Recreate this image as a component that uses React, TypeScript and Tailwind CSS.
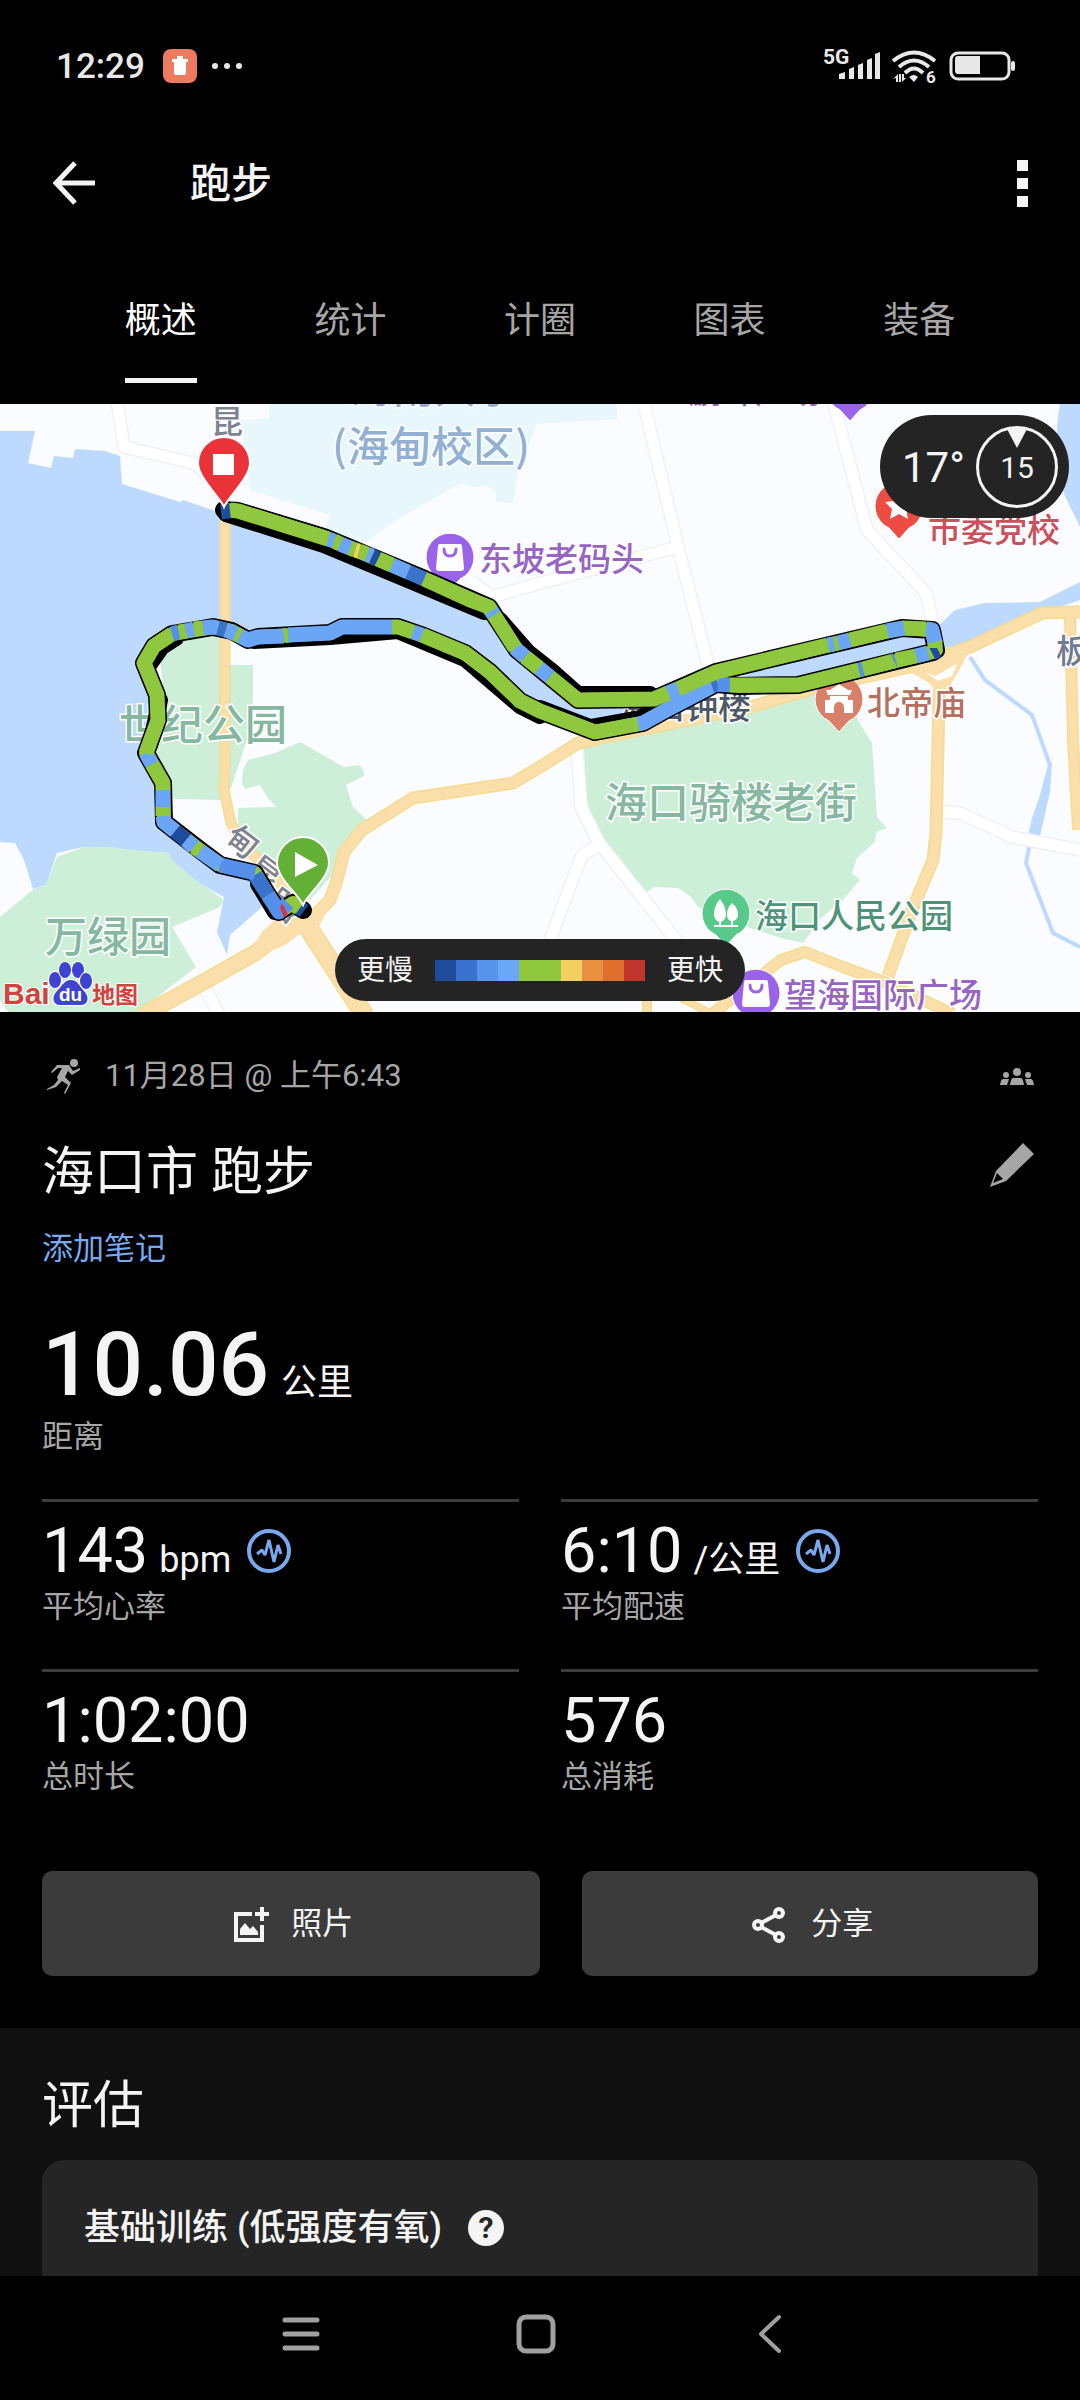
import type { ReactNode } from "react";

const GREEN = "#8fc73e";
const BLUE = "#6aa6f5";
const MID = "#5490ea";
const DARK = "#3a72cc";
const NAVY = "#1e4b9c";

const tabs = ["概述", "统计", "计圈", "图表", "装备"];

const routeOutline =
  "303,910 293,903 279,912 268,895 255,873 220,865 200,850 164,822 163,783 146,753 158,720 157,695 144,663 154,646 172,634 213,627 232,631 248,640 258,637 330,633 342,627 398,627 424,636 465,653 490,672 520,701 540,711 595,732 643,723 670,708 716,684 740,686 798,685 933,652 936,650 932,630 902,628 716,672 654,699 578,700 550,677 517,650 489,607 420,577 324,537 238,511 224,510";

const route = [
  { color: NAVY, points: "304,911 300,908" },
  { color: GREEN, points: "299,908 290,902" },
  { color: MID, points: "288,903 279,912 268,895" },
  { color: DARK, points: "268,895 255,875" },
  { color: MID, points: "255,873 220,865" },
  { color: BLUE, points: "220,865 200,851" },
  { color: GREEN, points: "200,851 194,847" },
  { color: BLUE, points: "194,847 186,840" },
  { color: NAVY, points: "186,840 175,831" },
  { color: BLUE, points: "175,831 164,822 163,816" },
  { color: GREEN, points: "163,816 163,807" },
  { color: BLUE, points: "163,807 163,790" },
  { color: GREEN, points: "163,790 163,783 152,764" },
  { color: BLUE, points: "152,764 146,753" },
  { color: GREEN, points: "146,753 158,720 157,695 144,663 154,646 172,634" },
  { color: MID, points: "172,634 179,632" },
  { color: GREEN, points: "179,632 186,631" },
  { color: BLUE, points: "186,631 194,629" },
  { color: GREEN, points: "194,629 203,628" },
  { color: BLUE, points: "203,628 213,627 218,628" },
  { color: DARK, points: "218,628 226,630" },
  { color: BLUE, points: "226,630 236,634" },
  { color: GREEN, points: "236,634 240,636" },
  { color: BLUE, points: "240,636 248,640 258,637 284,636" },
  { color: GREEN, points: "284,636 288,635" },
  { color: BLUE, points: "288,635 330,633 342,627 392,627" },
  { color: GREEN, points: "392,627 398,627 413,632" },
  { color: BLUE, points: "413,632 422,635" },
  { color: GREEN, points: "422,635 465,653 490,672 520,701 540,711 595,732 638,724" },
  { color: BLUE, points: "638,724 643,723 670,708 712,686" },
  { color: DARK, points: "712,686 718,684" },
  { color: MID, points: "718,684 730,685" },
  { color: GREEN, points: "730,685 798,685 859,670" },
  { color: MID, points: "859,670 863,669" },
  { color: GREEN, points: "863,669 894,661" },
  { color: MID, points: "894,661 896,660" },
  { color: GREEN, points: "896,660 916,656" },
  { color: BLUE, points: "916,656 928,653" },
  { color: NAVY, points: "932,653 938,650" },
  { color: GREEN, points: "935,648 935,640" },
  { color: BLUE, points: "935,642 932,630 926,629" },
  { color: GREEN, points: "926,629 902,628" },
  { color: BLUE, points: "904,628 887,631" },
  { color: GREEN, points: "887,631 850,640" },
  { color: BLUE, points: "850,640 838,643" },
  { color: GREEN, points: "838,643 834,644" },
  { color: BLUE, points: "834,644 828,645" },
  { color: GREEN, points: "828,645 716,672 678,689" },
  { color: BLUE, points: "678,689 668,693" },
  { color: GREEN, points: "668,693 654,699 578,700 550,677" },
  { color: BLUE, points: "550,677 539,668" },
  { color: GREEN, points: "539,668 525,657" },
  { color: BLUE, points: "525,657 515,648" },
  { color: GREEN, points: "515,648 494,615" },
  { color: BLUE, points: "494,615 490,609" },
  { color: GREEN, points: "491,611 489,607 470,600 424,579" },
  { color: DARK, points: "424,579 408,572" },
  { color: BLUE, points: "408,572 392,565" },
  { color: GREEN, points: "392,565 378,559" },
  { color: NAVY, points: "378,559 372,556" },
  { color: BLUE, points: "372,556 367,554" },
  { color: GREEN, points: "367,554 359,551" },
  { color: "#efd060", points: "359,551 355,550" },
  { color: GREEN, points: "355,550 350,548" },
  { color: BLUE, points: "350,548 340,544" },
  { color: GREEN, points: "340,544 334,541" },
  { color: BLUE, points: "334,541 328,539" },
  { color: GREEN, points: "328,539 238,511 230,510" },
  { color: NAVY, points: "230,511 221,512" },
];

const routeShadows = [
  "226,514 324,545 420,585 484,612",
  "254,641 330,637 398,631 465,659 520,706 540,716",
  "150,664 162,647 176,638",
  "160,700 150,745",
  "258,884 275,912",
  "500,620 528,652 552,671 578,694 650,694",
  "540,708 590,727 640,718 700,686",
];

const majorRoads = [
  { width: 11, points: "225,510 225,770 224,790 231,823 241,842 286,889 300,912" },
  { width: 20, points: "300,915 344,983 365,1016" },
  { width: 17, points: "141,1016 207,980 255,953 300,918" },
  { width: 13, points: "312,918 330,900 337,880 344,852 362,830 413,798 513,783 540,767 578,743 640,730 747,708 815,688 919,665 970,647 1042,613 1080,612" },
  { width: 13, points: "941,670 939,700 936,833 933,860 912,910 888,976" },
  { width: 12, points: "712,1014 781,960 805,952 843,967 884,982 953,1014" },
  { width: 10, points: "647,1014 647,995" },
  { width: 8, points: "712,1014 681,998" },
  { width: 12, points: "1070,613 1073,740 1078,830" },
];

const minorRoads = [
  "117,400 124,447 193,463 215,480",
  "643,400 678,547 712,680",
  "674,548 540,583 492,597 470,580",
  "833,400 867,530 926,593 933,625",
  "577,750 581,807 599,843 680,945",
  "597,845 581,857 550,940",
  "943,812 960,813 1012,837 1080,850",
  "203,985 220,1016",
];

const placeLabels = [
  { x: 350, y: 403, size: 42, fill: "#93afd3", text: "海南大学" },
  { x: 332, y: 462, size: 42, fill: "#93afd3", text: "(海甸校区)" },
  { x: 119, y: 740, size: 42, fill: "#86b7a0", text: "世纪公园" },
  { x: 605, y: 818, size: 42, fill: "#86b7a0", text: "海口骑楼老街" },
  { x: 45, y: 952, size: 42, fill: "#86b7a0", text: "万绿园" },
  { x: 211, y: 433, size: 32, fill: "#7f8391", text: "昆" },
  { x: 689, y: 403, size: 33, fill: "#9765c4", text: "鹏晖广场" },
  { x: 479, y: 571, size: 33, fill: "#9765c4", text: "东坡老码头" },
  { x: 784, y: 1007, size: 33, fill: "#9765c4", text: "望海国际广场" },
  { x: 928, y: 542, size: 33, fill: "#c9505c", text: "市委党校" },
  { x: 867, y: 715, size: 33, fill: "#b5705f", text: "北帝庙" },
  { x: 755, y: 928, size: 33, fill: "#4f9478", text: "海口人民公园" },
  { x: 619, y: 719, size: 33, fill: "#4d5768", text: "海口钟楼" },
  { x: 1056, y: 663, size: 33, fill: "#6f7b92", text: "板" },
];

const paceColors = [
  "bg-[#1e4b9c]",
  "bg-[#3973cf]",
  "bg-[#5893ec]",
  "bg-[#6ba7f7]",
  "bg-[#8fc73e]",
  "bg-[#8fc73e]",
  "bg-[#f3cf61]",
  "bg-[#e99040]",
  "bg-[#df6f2c]",
  "bg-[#c2352c]",
];

function StatusBar() {
  return (
    <div className="flex h-[132px] items-center justify-between pr-[65px] pl-[56px] text-[#e8e8e8]">
      <div className="flex items-center">
        <span className="text-[35px] leading-none font-medium">12:29</span>
        <svg className="ml-[18px] size-[34px]" viewBox="0 0 34 34">
          <rect width="34" height="34" rx="8" fill="#ee7a5f" />
          <path d="M9 10h16v3H9zM14 7h6v3h-6zM11 13h12v11a2 2 0 0 1-2 2h-8a2 2 0 0 1-2-2z" fill="#fff" />
        </svg>
        <svg className="ml-[14px] h-2 w-8" viewBox="0 0 32 8" fill="currentColor">
          <circle cx="4" cy="4" r="3" />
          <circle cx="16" cy="4" r="3" />
          <circle cx="28" cy="4" r="3" />
        </svg>
      </div>
      <svg className="h-14 w-[196px] overflow-visible" viewBox="819 38 196 56" fill="currentColor">
        <text x="823" y="64" fontSize="21" fontWeight="700">5G</text>
        <path d="M839 79v-5l6-2v7zM849 79v-10l5-2v12zM858 79v-14l5-2v16zM867 79v-19l5-2v21zM875 79v-25l5-2v27z" />
        <g fill="none" stroke="currentColor" strokeWidth="4">
          <path d="M893 61q21-17 42 0" />
          <path d="M899 67q15-13 30 0" />
          <path d="M905 73q9-9 18 0" />
        </g>
        <path d="M909 77q5-4 9 0l-4 5z" />
        <path d="M893 79l5-5v8h-2v-4zM899 74h2v8h-2zM902 74h2v4h2l-4 4z" />
        <text x="926" y="83" fontSize="17" fontWeight="700">6</text>
        <rect x="951" y="53" width="58" height="26" rx="7" fill="none" stroke="currentColor" strokeWidth="3" />
        <path d="M958 56h22v18h-22a3 3 0 0 1-3-3V59a3 3 0 0 1 3-3z" />
        <rect x="1011" y="61" width="4" height="10" rx="2" />
      </svg>
    </div>
  );
}

function Poi({ x, y, color, children }: { x: number; y: number; color: string; children: ReactNode }) {
  return (
    <g transform={`translate(${x} ${y})`}>
      <path d="M0 33l-10-11A24 24 0 1 1 10 22z" fill={color} stroke="#fff" strokeWidth="1" />
      <g fill="#fff">{children}</g>
    </g>
  );
}

function Bag({ color }: { color: string }) {
  return (
    <>
      <path d="M-10-13h20a2 2 0 0 1 2 2l2 22a3 3 0 0 1-3 3h-22a3 3 0 0 1-3-3l2-22a2 2 0 0 1 2-2z" />
      <path d="M-6-8q0 7 6 7t6-7" fill="none" stroke={color} strokeWidth="3" strokeLinecap="round" />
    </>
  );
}

function MapCanvas() {
  return (
    <svg
      className="block h-full w-full"
      viewBox="0 404 1080 608"
      preserveAspectRatio="xMidYMid slice"
      role="img"
      aria-label="跑步路线"
    >
      <rect y="404" width="1080" height="608" fill="#fbfcff" />

      {/* campus, water, parks */}
      <polygon
        points="269,404 269,418 241,420 250,490 330,515 324,533 365,543 396,520 461,483 475,488 485,485 496,492 496,502 513,503 516,483 527,450 537,424 617,419 617,404"
        fill="#e8f7fc"
      />
      <g fill="#bed9fe">
        <polygon points="0,431 35,431 28,463 51,468 54,456 73,458 75,449 105,451 120,456 122,484 180,502 183,500 218,512 330,548 425,585 480,607 500,640 545,675 578,700 660,700 716,672 902,628 932,632 955,610 985,603 1040,602 1080,582 1080,600 1040,614 970,643 945,648 933,652 798,682 716,684 690,700 643,723 595,732 540,711 520,701 465,653 398,628 250,636 172,634 144,663 158,700 146,753 163,783 164,822 200,850 225,868 255,880 270,902 262,907 230,935 227,955 217,932 224,897 193,880 172,863 169,853 83,847 57,853 46,885 33,889 24,860 15,843 0,842" />
        <path d="M1060 404q-8 40 4 90l16 33V404z" />
        <path d="M1052 762l-2 30-10 44h-12l4-18z" />
      </g>
      <polyline
        points="970,657 985,680 1032,715 1050,765 1032,833 1026,863 1053,933 1080,947"
        fill="none"
        stroke="#bed9fe"
        strokeWidth="4"
      />
      <g fill="#cdefd7">
        <polygon points="160,660 175,640 200,637 220,636 220,665 253,665 253,700 248,737 231,788 220,800 174,799 155,755 165,700" />
        <polygon points="300,742 344,767 360,765 364,772 364,776 346,785 353,807 367,820 348,840 334,873 310,900 275,885 238,827 238,808 276,807 267,797 260,785 245,789 242,783 243,770 248,760 275,753" />
        <polygon points="0,917 34,889 46,885 57,857 83,847 110,847 140,851 169,853 172,860 193,878 224,900 220,907 172,927 196,967 138,1012 8,1012 0,1000" />
        <polygon points="580,748 640,733 753,713 802,696 826,690 850,705 862,727 872,743 877,817 887,828 877,832 874,843 857,858 852,873 860,880 843,900 815,923 811,932 803,943 781,938 747,927 698,907 691,897 678,888 654,887 647,892 602,840 588,827 583,783" />
      </g>

      {/* streets */}
      <g fill="none" strokeLinejoin="round">
        {minorRoads.map((points) => (
          <polyline key={points} points={points} stroke="#f0f1f5" strokeWidth="14" />
        ))}
        {minorRoads.map((points) => (
          <polyline key={points} points={points} stroke="#fff" strokeWidth="11" />
        ))}
        {majorRoads.map((road) => (
          <polyline key={road.points} points={road.points} stroke="#f4dc90" strokeWidth={road.width} />
        ))}
        {majorRoads.map((road) => (
          <polyline key={road.points} points={road.points} stroke="#fbdfab" strokeWidth={road.width - 3} />
        ))}
      </g>
      <path d="M912 673l24-18 34-6-10 20-12 20-8 8-11-14z" fill="#fbdfab" />
      <path d="M925 672l10 4 22-12-5 12-14 5z" fill="#fff" />
      <polygon points="250,950 262,932 280,915 325,915 320,925 305,930 285,945 262,955" fill="#fbdfab" />

      <g fontFamily='"Noto Sans CJK SC", sans-serif' fontWeight="500" stroke="#fff" strokeWidth="3" paintOrder="stroke">
        {placeLabels.map((label) => (
          <text key={label.text} x={label.x} y={label.y} fontSize={label.size} fill={label.fill}>
            {label.text}
          </text>
        ))}
        <g fontSize="32" fill="#7f8391" textAnchor="middle">
          <text transform="translate(242 842) rotate(37)" y="11">甸</text>
          <text transform="translate(265 873) rotate(37)" y="11">昆</text>
          <text transform="translate(284 906) rotate(37)" y="11">路</text>
        </g>
      </g>

      <Poi x={450} y={557} color="#9a63ea">
        <Bag color="#9a63ea" />
      </Poi>
      <Poi x={756} y={993} color="#9a63ea">
        <Bag color="#9a63ea" />
      </Poi>
      <Poi x={850} y={388} color="#9a63ea">
        <Bag color="#9a63ea" />
      </Poi>
      <Poi x={899} y={506} color="#ec4c41">
        <path d="M0-14l4 9 10 1-7 7 2 10-9-5-9 5 2-10-7-7 10-1z" />
      </Poi>
      <Poi x={839} y={699} color="#d98068">
        <path d="M0-15l9 6h4l-2 5H-11l-2-5h4zM-9-3H9v4h5v13H5V8a5 5 0 0 0-10 0v6h-9V1h5z" />
      </Poi>
      <Poi x={726} y={913} color="#57c98a">
        <path d="M-6-14q6 8 6 15 0 6-5 8v3h10V8q-4-1-4-7 0-6 5-11 6 5 6 11 0 6-5 7v4h5v2h-24v-2h5V9q-5-2-5-8 0-8 6-15z" />
      </Poi>

      {/* recorded track */}
      <g fill="none" stroke="#000" strokeLinejoin="round" strokeLinecap="round">
        <polyline points={routeOutline} strokeWidth="18" />
        {routeShadows.map((points) => (
          <polyline key={points} points={points} strokeWidth="16" />
        ))}
      </g>
      <g fill="none" strokeLinejoin="round">
        <polyline points={routeOutline} stroke={GREEN} strokeWidth="14" />
        {route.map((segment) => (
          <polyline key={segment.points} points={segment.points} stroke={segment.color} strokeWidth="15" />
        ))}
      </g>
      <path d="M282 903l6 12-4 2-4-9z" fill="#d8343c" />

      <g stroke="#fff" strokeWidth="2">
        <path d="M224 507c-4-10-26-29-26-44a26 26 0 0 1 52 0c0 15-22 34-26 44z" fill="#ea3338" />
        <path d="M303 905c-4-10-26-27-26-42a26 26 0 0 1 52 0c0 15-22 32-26 42z" fill="#62b035" />
      </g>
      <path d="M213 454h21v21h-21zM295 852v25l23-12z" fill="#fff" />

      <g fontFamily='"Liberation Sans", sans-serif' fontWeight="700" stroke="#fff" strokeWidth="2" paintOrder="stroke">
        <text x="3" y="1004" fontSize="30" fill="#d04340">Bai</text>
        <text x="92" y="1003" fontSize="23" fill="#d04340" fontFamily='"Noto Sans CJK SC", sans-serif'>地图</text>
        <g fill="#3f43d2">
          <ellipse cx="55" cy="980" rx="6" ry="8" />
          <ellipse cx="65" cy="970" rx="6" ry="8" />
          <ellipse cx="78" cy="970" rx="6" ry="8" />
          <ellipse cx="86" cy="981" rx="6" ry="8" />
          <path d="M71 980c7 0 8 6 13 11 6 6 4 14-3 14H60c-7 0-9-8-3-14 5-5 7-11 14-11z" />
        </g>
        <text x="59" y="1001" fontSize="19" fill="#fff" stroke="none">du</text>
      </g>
    </svg>
  );
}

function RouteMap() {
  return (
    <section className="relative h-[608px] overflow-hidden">
      <MapCanvas />
      <div className="absolute top-[11px] right-[11px] flex h-[103px] w-[189px] items-center justify-between rounded-full bg-[#242424] pr-[11px] pl-[22px] text-[#f4f4f4]">
        <span className="pt-[2px] text-[42px] leading-none">17°</span>
        <span className="relative grid size-[82px] place-items-center rounded-full border-[3px] border-[#f4f4f4] pt-[2px] text-[30px] leading-none">
          15
          <svg className="absolute top-0 h-5 w-5" viewBox="0 0 20 20" fill="currentColor">
            <path d="M0 0h20L10 19z" />
          </svg>
        </span>
      </div>
      <div className="absolute inset-x-0 bottom-[11px] flex justify-center">
        <div className="flex h-[62px] items-center gap-[22px] rounded-full bg-[#242424] px-[22px] text-[28px] text-[#f4f4f4]">
          <span className="pt-[2px]">更慢</span>
          <div className="flex">
            {paceColors.map((color, index) => (
              <span key={index} className={`h-[21px] w-[21px] ${color}`} />
            ))}
          </div>
          <span className="pt-[2px]">更快</span>
        </div>
      </div>
    </section>
  );
}

function PulseIcon() {
  return (
    <svg className="ml-4 size-[45px] shrink-0" viewBox="0 0 45 45" fill="none" stroke="#78a9ee">
      <circle cx="22" cy="22" r="20" strokeWidth="4" />
      <path d="M10 25l5-4 3 5 4-15 5 22 4-17 3 9" strokeWidth="3" strokeLinejoin="bevel" />
    </svg>
  );
}

function Stat({ value, unit, label, pulse }: { value: string; unit?: string; label: string; pulse?: boolean }) {
  return (
    <div className="border-t-[3px] border-[#3c3c3c] pt-[17px] pb-[40px]">
      <div className="flex h-16 items-center">
        <p className="flex items-baseline gap-[11px]">
          <span className="text-[63px] leading-[64px]">{value}</span>
          {unit && <span className="text-[36px] leading-none">{unit}</span>}
        </p>
        {pulse && <PulseIcon />}
      </div>
      <p className="mt-[2px] text-[31px] leading-[44px] text-[#a6a6a6]">{label}</p>
    </div>
  );
}

function Summary() {
  return (
    <section className="px-[42px] pt-[42px] pb-[52px]">
      <div className="flex h-11 items-center text-[#a6a6a6]">
        <svg className="ml-[5px] h-9 w-[34px]" viewBox="0 0 34 36" fill="currentColor">
          <circle cx="27" cy="5" r="4" />
          <path d="M19 7l-9 0-6 7 1 1 6-5h4l-5 9 1 3-4 5-7 4v1l9-3 6-6 6 4-4 8 1 1 6-11-6-6 3-6 4 4 8-5v-2l-7 3-4-6z" />
        </svg>
        <p className="ml-[24px] text-[31px]">11月28日 @ 上午6:43</p>
        <svg className="mr-[4px] ml-auto h-[18px] w-[34px]" viewBox="0 0 34 18" fill="currentColor">
          <circle cx="17" cy="5" r="4" />
          <circle cx="6" cy="8" r="3" />
          <circle cx="28" cy="8" r="3" />
          <path d="M13 11h8q2 0 3 7H10q1-7 3-7zM3 12h6l-2 6H0q1-6 3-6zM25 12h6q2 0 3 6h-7z" />
        </svg>
      </div>
      <div className="mt-[39px] flex h-[72px] items-center justify-between">
        <h1 className="text-[52px]">海口市 跑步</h1>
        <button aria-label="编辑" className="mr-[4px] mb-4">
          <svg className="size-11" viewBox="0 0 44 44" fill="#a6a6a6">
            <path fillRule="evenodd" d="M33 0L44 11 16 38 0 44 6 28zM7 30L3 40l10-4z" />
          </svg>
        </button>
      </div>
      <a href="#notes" className="mt-[18px] block w-fit text-[31px] leading-[44px] text-[#78a9ee]">
        添加笔记
      </a>
      <p className="mt-[49px] flex items-baseline gap-3">
        <span className="text-[89px] leading-[90px] font-medium">10.06</span>
        <span className="text-[36px] leading-none">公里</span>
      </p>
      <p className="mt-[5px] text-[31px] leading-[44px] text-[#a6a6a6]">距离</p>
      <div className="mt-[40px] grid grid-cols-2 gap-x-[42px]">
        <Stat value="143" unit="bpm" label="平均心率" pulse />
        <Stat value="6:10" unit="/公里" label="平均配速" pulse />
        <Stat value="1:02:00" label="总时长" />
        <Stat value="576" label="总消耗" />
      </div>
      <div className="mt-8 flex gap-[42px] text-[31px]">
        <button className="flex h-[105px] grow-[12] basis-0 items-center justify-center gap-[22px] rounded-[10px] bg-[#3b3b3b] pt-[2px] pl-[5px]">
          <svg className="size-9" viewBox="0 0 36 36" fill="none" stroke="currentColor" strokeWidth="4">
            <path d="M19 7H3v26h26V18M22 7h14M29 0v14" />
            <path d="M7 28v-6l5-6 5 6 3-3 5 6v3z" fill="currentColor" stroke="none" />
          </svg>
          照片
        </button>
        <button className="flex h-[105px] grow-[11] basis-0 items-center justify-center gap-6 rounded-[10px] bg-[#3b3b3b] pt-[2px] pl-[5px]">
          <svg className="size-9" viewBox="0 0 36 36" fill="none" stroke="currentColor" strokeWidth="4">
            <circle cx="7" cy="18" r="4" />
            <circle cx="28" cy="6" r="4" />
            <circle cx="28" cy="30" r="4" />
            <path d="M10 16L25 8M10 20l15 8" />
          </svg>
          分享
        </button>
      </div>
    </section>
  );
}

function SystemNav() {
  return (
    <nav className="grid h-[124px] grid-cols-3 place-items-center bg-black pr-[192px] pb-2 pl-[184px]">
      <button aria-label="最近任务">
        <svg className="h-10 w-[38px]" viewBox="0 0 38 40" stroke="#a0a0a0" strokeWidth="5" strokeLinecap="round">
          <path d="M3 6h32M3 20h32M3 34h32" />
        </svg>
      </button>
      <button aria-label="主屏幕">
        <svg className="size-10" viewBox="0 0 40 40" fill="none" stroke="#a0a0a0" strokeWidth="5">
          <rect x="3" y="3" width="34" height="34" rx="7" />
        </svg>
      </button>
      <button aria-label="返回">
        <svg className="h-10 w-6" viewBox="0 0 24 40" fill="none" stroke="#a0a0a0" strokeWidth="4" strokeLinecap="round" strokeLinejoin="round">
          <path d="M20 3L2 20l18 17" />
        </svg>
      </button>
    </nav>
  );
}

export default function App() {
  return (
    <main
      lang="zh-CN"
      className="flex min-h-screen flex-col bg-black font-[Roboto,'Noto_Sans_CJK_SC',sans-serif] text-[#f4f4f4]"
    >
      <StatusBar />
      <header className="flex h-[102px] items-center px-[52px]">
        <button aria-label="返回上一页">
          <svg className="size-11" viewBox="0 0 44 44" fill="none" stroke="currentColor" strokeWidth="5">
            <path d="M23 2L4 22l19 20M4 22h39" />
          </svg>
        </button>
        <h2 className="ml-[94px] pt-1 text-[41px] font-medium">跑步</h2>
        <button aria-label="更多" className="ml-auto flex flex-col gap-[7px]">
          <span className="size-[11px] bg-[#f4f4f4]" />
          <span className="size-[11px] bg-[#f4f4f4]" />
          <span className="size-[11px] bg-[#f4f4f4]" />
        </button>
      </header>
      <div role="tablist" className="flex h-[170px] items-end px-[66px] pb-[21px]">
        {tabs.map((tab, index) => (
          <div key={tab} className="flex flex-1 justify-center">
            <button
              role="tab"
              aria-selected={index === 0}
              className={`border-b-[5px] pb-[30px] text-[36px] leading-[54px] ${
                index === 0 ? "border-[#f4f4f4] text-white" : "border-transparent text-[#a6a6a6]"
              }`}
            >
              {tab}
            </button>
          </div>
        ))}
      </div>
      <RouteMap />
      <Summary />
      <section className="grow bg-[#101010] px-[42px] pt-[42px]">
        <h2 className="flex h-[72px] items-center text-[51px]">评估</h2>
        <div className="mt-[18px] flex items-center gap-[26px] rounded-t-[22px] bg-[#252525] px-[42px] pt-[41px] pb-[21px]">
          <h3 className="text-[36px] leading-[54px] font-medium">基础训练 (低强度有氧)</h3>
          <button
            aria-label="说明"
            className="grid size-9 place-items-center rounded-full bg-[#f4f4f4] text-[30px] leading-none font-bold text-[#252525]"
          >
            ?
          </button>
        </div>
      </section>
      <SystemNav />
    </main>
  );
}
